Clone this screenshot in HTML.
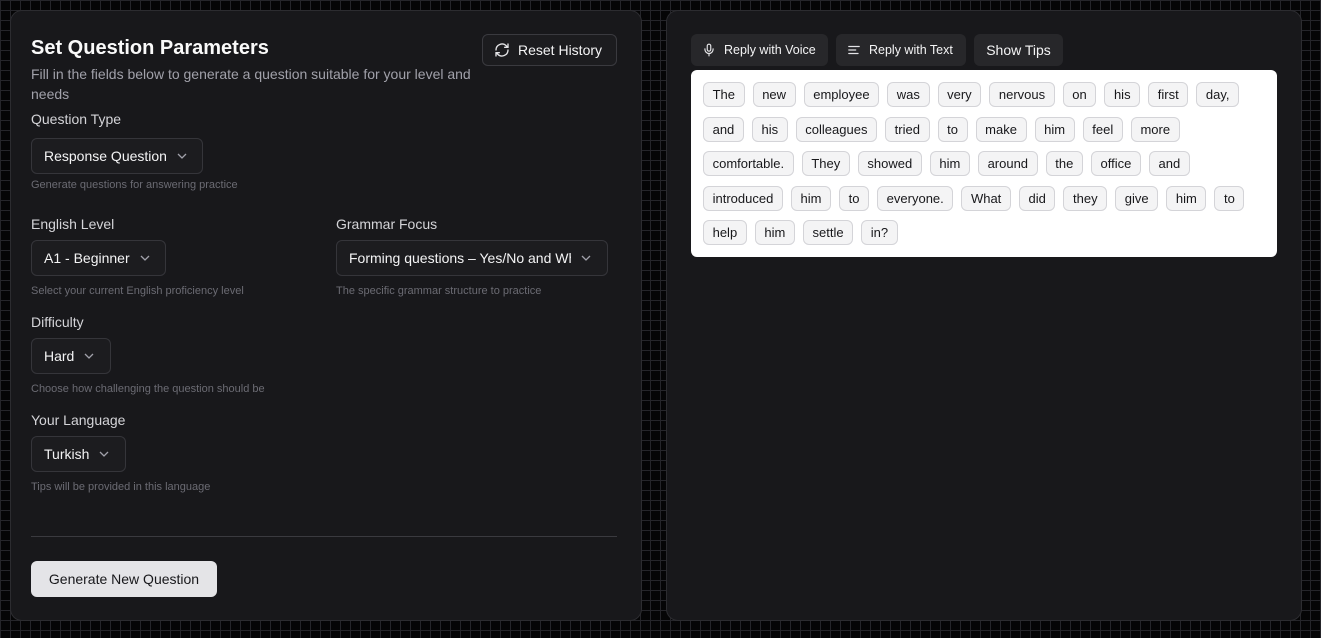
<!DOCTYPE html>
<html><head><style>
*{box-sizing:border-box;margin:0;padding:0}
body{width:1321px;height:638px;overflow:hidden;background-color:#050506;background-image:linear-gradient(#25252a 1px,transparent 1px),linear-gradient(90deg,#25252a 1px,transparent 1px);background-size:10px 10px;font-family:"Liberation Sans",sans-serif;color:#f4f4f5;position:relative}
.panel{position:absolute;top:10px;height:611px;background:#18181b;border:1px solid #2c2c30;border-radius:12px}
.a{position:absolute}
h1{font-size:20px;font-weight:bold;color:#fafafa}
.sub{font-size:14px;color:#a1a1aa;line-height:20px}
.lab{font-size:14px;color:#d4d4d8}
.sel{position:absolute;height:36px;border:1px solid #35353a;border-radius:6px;background:#1c1c1f;font-size:14px;color:#f4f4f5;padding:0 12px;display:flex;align-items:center;gap:10px;white-space:nowrap;overflow:hidden}
.hint{font-size:11px;color:#6b6b73}
.chev{width:10px;height:6px;flex:none}
.btn{position:absolute;height:32px;border-radius:6px;background:#27272a;font-size:13px;display:flex;align-items:center;gap:8px;padding:0 11px;color:#f4f4f5}
.card{position:absolute;left:691px;top:70px;width:586px;height:187px;background:#fff;border-radius:6px;padding:12px 12px}
.row{display:flex;gap:8px;height:25px;margin-bottom:9.5px}
.c{height:25px;border:1px solid #d4d4d8;background:#f4f4f5;border-radius:6px;padding:0 8.6px;font-size:13px;color:#18181b;display:flex;align-items:center}
</style></head><body>
<div class="panel" style="left:10px;width:632px"></div>
<div class="panel" style="left:666px;width:636px"></div>

<h1 class="a" style="left:31px;top:37px">Set Question Parameters</h1>
<div class="a sub" style="left:31px;top:64px;width:460px">Fill in the fields below to generate a question suitable for your level and needs</div>
<div class="btn" style="left:482px;top:34px;height:32px;width:135px;background:#1c1c1f;border:1px solid #3a3a3f;font-size:14px">
<svg width="16" height="16" viewBox="0 0 24 24" fill="none" stroke="#e4e4e7" stroke-width="2" stroke-linecap="round"><path d="M21 12a9 9 0 0 1-15.5 6.2L3 16M3 12a9 9 0 0 1 15.5-6.2L21 8M21 3v5h-5M3 21v-5h5"/></svg>Reset History</div>

<div class="a lab" style="left:31px;top:111px">Question Type</div>
<div class="sel" style="left:31px;top:138px;width:172px">Response Question <svg class="chev" viewBox="0 0 10 6"><path d="M1 1l4 4 4-4" stroke="#a1a1aa" fill="none" stroke-width="1.3"/></svg></div>
<div class="a hint" style="left:31px;top:179px">Generate questions for answering practice</div>

<div class="a lab" style="left:31px;top:216px">English Level</div>
<div class="sel" style="left:31px;top:240px;width:135px">A1 - Beginner <svg class="chev" viewBox="0 0 10 6"><path d="M1 1l4 4 4-4" stroke="#a1a1aa" fill="none" stroke-width="1.3"/></svg></div>
<div class="a hint" style="left:31px;top:285px">Select your current English proficiency level</div>

<div class="a lab" style="left:336px;top:216px">Grammar Focus</div>
<div class="sel" style="left:336px;top:240px;width:272px"><span style="width:222px;overflow:hidden">Forming questions – Yes/No and Wh-questions</span><svg class="chev" viewBox="0 0 10 6"><path d="M1 1l4 4 4-4" stroke="#a1a1aa" fill="none" stroke-width="1.3"/></svg></div>
<div class="a hint" style="left:336px;top:285px">The specific grammar structure to practice</div>

<div class="a lab" style="left:31px;top:314px">Difficulty</div>
<div class="sel" style="left:31px;top:338px;width:80px">Hard <svg class="chev" viewBox="0 0 10 6"><path d="M1 1l4 4 4-4" stroke="#a1a1aa" fill="none" stroke-width="1.3"/></svg></div>
<div class="a hint" style="left:31px;top:383px">Choose how challenging the question should be</div>

<div class="a lab" style="left:31px;top:412px">Your Language</div>
<div class="sel" style="left:31px;top:436px;width:95px">Turkish <svg class="chev" viewBox="0 0 10 6"><path d="M1 1l4 4 4-4" stroke="#a1a1aa" fill="none" stroke-width="1.3"/></svg></div>
<div class="a hint" style="left:31px;top:481px">Tips will be provided in this language</div>

<div class="a" style="left:31px;top:536px;width:586px;height:1px;background:#3a3a3f"></div>
<div class="a" style="left:31px;top:561px;width:186px;height:36px;background:#e4e4e7;border-radius:6px;color:#18181b;font-size:14px;display:flex;align-items:center;justify-content:center">Generate New Question</div>

<div class="btn" style="left:691px;top:34px;width:137px;font-size:12.5px"><svg width="14" height="14" viewBox="0 0 24 24" fill="none" stroke="#e4e4e7" stroke-width="2" stroke-linecap="round"><rect x="9" y="2" width="6" height="12" rx="3"/><path d="M19 10v1a7 7 0 0 1-14 0v-1M12 18v4"/></svg>Reply with Voice</div>
<div class="btn" style="left:836px;top:34px;width:130px;font-size:12.5px"><svg width="14" height="14" viewBox="0 0 24 24" fill="none" stroke="#e4e4e7" stroke-width="2" stroke-linecap="round"><path d="M3 6h18M3 12h12M3 18h16"/></svg>Reply with Text</div>
<div class="btn" style="left:974px;top:34px;width:89px;font-size:14px;justify-content:center">Show Tips</div>

<div class="card">
<div class="row"><span class="c">The</span><span class="c">new</span><span class="c">employee</span><span class="c">was</span><span class="c">very</span><span class="c">nervous</span><span class="c">on</span><span class="c">his</span><span class="c">first</span><span class="c">day,</span></div>
<div class="row"><span class="c">and</span><span class="c">his</span><span class="c">colleagues</span><span class="c">tried</span><span class="c">to</span><span class="c">make</span><span class="c">him</span><span class="c">feel</span><span class="c">more</span></div>
<div class="row"><span class="c">comfortable.</span><span class="c">They</span><span class="c">showed</span><span class="c">him</span><span class="c">around</span><span class="c">the</span><span class="c">office</span><span class="c">and</span></div>
<div class="row"><span class="c">introduced</span><span class="c">him</span><span class="c">to</span><span class="c">everyone.</span><span class="c">What</span><span class="c">did</span><span class="c">they</span><span class="c">give</span><span class="c">him</span><span class="c">to</span></div>
<div class="row"><span class="c">help</span><span class="c">him</span><span class="c">settle</span><span class="c">in?</span></div>
</div>
</body></html>
